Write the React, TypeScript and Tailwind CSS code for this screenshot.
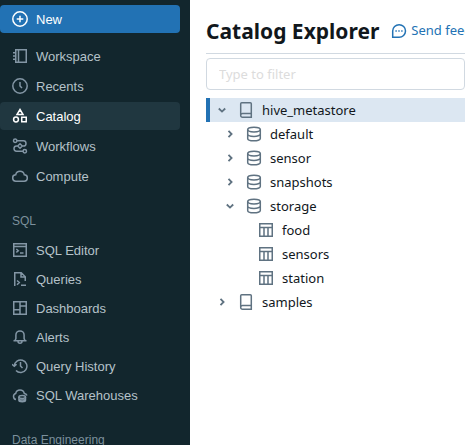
import type { ReactNode } from "react";

const shapes: Record<string, ReactNode> = {
  plus: <><circle cx="8" cy="8" r="7.2" /><path d="M8 4.7v6.6M4.7 8h6.6" /></>,
  notebook: <path d="M3.75 1.75h10.5v12.5H3.75zM6.5 1.75v12.5M1 4.75h2.5M1 8h2.5M1 11.25h2.5" />,
  clock: <><circle cx="8" cy="8" r="7.2" /><path d="M8 4v4l2 2" /></>,
  catalog: <><path d="M8 1.5 11 6.5H5zM9.75 9.25h4.5v4.5h-4.5z" /><circle cx="4" cy="11.5" r="2.4" /></>,
  workflows: <><circle cx="3.2" cy="2.8" r="1.7" /><circle cx="12.8" cy="13.2" r="1.7" /><path d="M5 2.8h6.4a2.6 2.6 0 0 1 0 5.2H10.3M5.7 8H4.6a2.6 2.6 0 0 0 0 5.2H11M8 5.7 10.3 8 8 10.3 5.7 8z" /></>,
  cloud: <path d="M4 13.2a3.2 3.2 0 0 1-.3-6.4 4.4 4.4 0 0 1 8.6 0 3.2 3.2 0 0 1-.3 6.4z" />,
  editor: <path d="M1.75 1.75h12.5v12.5H1.75zM1.75 4.5h12.5M4.3 7l2 1.7-2 1.7M8 11h3.5" />,
  query: <path d="M2.75 15V1.75h6.5l4 4V10M9 2v4h4M5 9.5l2.3 2L5 13.7M9 14.3h5" />,
  dashboard: <path d="M1.75 1.75h12.5v12.5H1.75zM8 1.75v12.5M1.75 9.75H8M8 6h6.25" />,
  bell: <path d="M1.5 11.75h13M3 11.5l.9-2V6a4.1 4.1 0 0 1 8.2 0v3.5l.9 2M6 12.2a2 2 0 0 0 4 0" />,
  history: <path d="M2.3 8A6.3 6.3 0 1 1 4 12.6M0 6.2l2.3 2 2.3-2M8.5 4v4l2 2" />,
  warehouse: <><path d="M4 12.5a3.1 3.1 0 0 1-.3-6 4.4 4.4 0 0 1 8.6 0q2 .4 2.7 2" /><ellipse cx="10.2" cy="10" rx="3.3" ry="1.4" /><path d="M6.9 10v3.2c0 1.9 6.6 1.9 6.6 0V10M6.9 11.8c0 1.7 6.6 1.7 6.6 0" /></>,
  chat: <><path d="M1.7 14.3V8A6.4 6.3 0 1 1 8 14.3z" /><path d="M4.4 8h1.4M7.3 8h1.4M10.2 8h1.4" /></>,
  book: <path d="M3.7 .75h8.6q1 0 1 1v13.5H4.5a1.8 1.8 0 0 1-1.8-1.8V1.75q0-1 1-1M2.7 13.2a1.8 1.8 0 0 1 1.8-1.7h8.7" />,
  database: <><ellipse cx="8" cy="3.6" rx="6.3" ry="2.4" /><path d="M1.7 3.6v8.8c0 3.2 12.6 3.2 12.6 0V3.6M1.7 8c0 3.2 12.6 3.2 12.6 0" /></>,
  table: <path d="M1.75 1.75h12.5v12.5H1.75zM1.75 5.5h12.5M6 5.5v8.7M10 5.5v8.7" />,
  down: <path d="M4.8 6.5 8 9.6l3.2-3.1" />,
  right: <path d="M6.5 4.8 9.6 8l-3.1 3.2" />,
};

function Icon({ name }: { name: string }) {
  return (
    <svg viewBox="0 0 16 16" className="size-4 shrink-0" fill="none" stroke="currentColor" strokeWidth={name === "down" || name === "right" ? 1.8 : 1.5} aria-hidden="true">
      {shapes[name]}
    </svg>
  );
}

function NavLink({ icon, label, active }: { icon: string; label: string; active?: boolean }) {
  return (
    <a href="#" aria-current={active ? "page" : undefined} className={`flex h-7 items-center gap-2 rounded px-3 ${active ? "bg-[#203740] text-white" : "text-[#b5c2c9]"}`}>
      <span className={active ? "" : "text-[#8396a5]"}><Icon name={icon} /></span>
      <span className="pt-0.5">{label}</span>
    </a>
  );
}

const mainLinks = [["notebook", "Workspace"], ["clock", "Recents"], ["catalog", "Catalog"], ["workflows", "Workflows"], ["cloud", "Compute"]];
const sqlLinks = [["editor", "SQL Editor"], ["query", "Queries"], ["dashboard", "Dashboards"], ["bell", "Alerts"], ["history", "Query History"], ["warehouse", "SQL Warehouses"]];

type Node = { label: string; icon: string; level: string; open?: boolean; leaf?: boolean; selected?: boolean };
const nodes: Node[] = [
  { label: "hive_metastore", icon: "book", level: "pl-1", open: true, selected: true },
  { label: "default", icon: "database", level: "pl-3" },
  { label: "sensor", icon: "database", level: "pl-3" },
  { label: "snapshots", icon: "database", level: "pl-3" },
  { label: "storage", icon: "database", level: "pl-3", open: true },
  { label: "food", icon: "table", level: "pl-12", leaf: true },
  { label: "sensors", icon: "table", level: "pl-12", leaf: true },
  { label: "station", icon: "table", level: "pl-12", leaf: true },
  { label: "samples", icon: "book", level: "pl-1" },
];

export default function App() {
  return (
    <div className="flex h-screen overflow-hidden bg-white text-[13px]">
      <nav className="w-[190px] shrink-0 overflow-hidden bg-[#12262d] pt-[5px] pr-2.5 font-['Liberation_Sans',Arial,sans-serif]">
        <button type="button" className="mb-[9px] flex h-7 w-full items-center gap-2 rounded bg-[#2272b4] px-3 text-white">
          <Icon name="plus" />
          <span className="pt-0.5">New</span>
        </button>
        <div className="flex flex-col gap-0.5">
          {mainLinks.map(([icon, label]) => <NavLink key={label} icon={icon} label={label} active={label === "Catalog"} />)}
        </div>
        <h2 className="mt-[21px] mb-[5px] px-3 text-xs leading-5 text-[#7c909c]">SQL</h2>
        <div className="flex flex-col gap-px">
          {sqlLinks.map(([icon, label]) => <NavLink key={label} icon={icon} label={label} />)}
        </div>
        <h2 className="mt-[21px] px-3 text-xs leading-5 text-[#7c909c]">Data Engineering</h2>
      </nav>
      <main className="min-w-0 flex-1 overflow-hidden pl-4 font-['Noto_Sans',sans-serif] text-[#11171c]">
        <header className="flex h-[54px] items-center gap-3 border-b border-[#d1d9e1] pt-2 whitespace-nowrap">
          <h1 className="text-[21px] leading-7 font-bold">Catalog Explorer</h1>
          <a href="#" className="flex items-center gap-1 text-[#2272b4]">
            <Icon name="chat" />
            Send feedback
          </a>
        </header>
        <input type="text" aria-label="Type to filter" placeholder="Type to filter" className="mt-1 block h-8 w-full rounded border border-[#d1d9e1] px-3 placeholder:text-[#dcdcdc]" />
        <ul role="tree" aria-label="Catalogs" className="mt-2">
          {nodes.map((n) => (
            <li key={n.label} role="treeitem" aria-selected={!!n.selected} aria-expanded={n.leaf ? undefined : !!n.open} className={`flex h-6 items-center border-l-4 ${n.level} ${n.selected ? "border-[#2272b4] bg-[#dce7f2]" : "border-transparent"}`}>
              {!n.leaf && <button type="button" aria-label={n.open ? "Collapse" : "Expand"} className="mr-2 text-[#5f7281]"><Icon name={n.open ? "down" : "right"} /></button>}
              <span className="mr-2 text-[#5f7281]"><Icon name={n.icon} /></span>
              <span className="pt-0.5">{n.label}</span>
            </li>
          ))}
        </ul>
      </main>
    </div>
  );
}
